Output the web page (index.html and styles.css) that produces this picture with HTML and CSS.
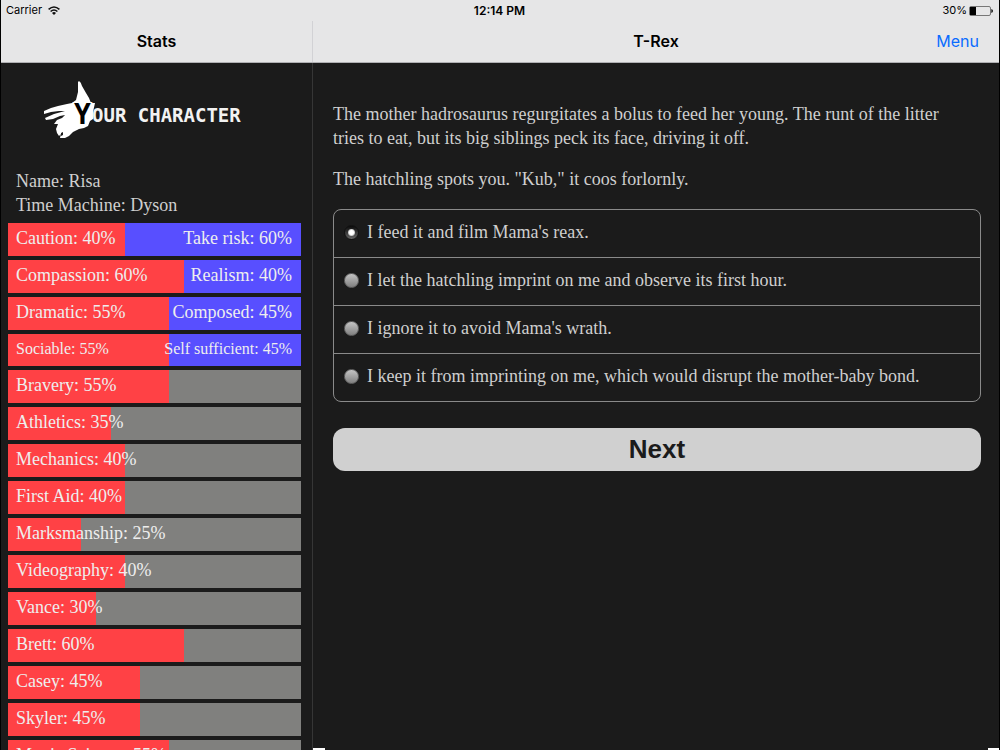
FILE: index.html
```html
<!DOCTYPE html>
<html lang="en">
<head>
<meta charset="utf-8">
<title>T-Rex</title>
<link rel="stylesheet" href="styles.css">
</head>
<body>
<div class="app">
  <header class="top">
    <div class="status">
      <span class="carrier">Carrier
        <svg class="wifi" viewBox="0 0 12 9" aria-hidden="true"><g fill="none" stroke="#111" stroke-width="1.6"><path d="M.6 3.4Q6-1.4 11.4 3.4"/><path d="M2.6 5.5Q6 2.5 9.4 5.5"/></g><path d="M4 6.9Q6 5.3 8 6.9L6 9Z" fill="#111"/></svg>
      </span>
      <strong class="clock">12:14 PM</strong>
      <span class="battery">30%
        <svg class="cell" viewBox="0 0 24 10" aria-hidden="true"><rect x=".5" y=".5" width="21" height="9" rx="1.5" fill="none" stroke="#777"/><rect x="1" y="1" width="6" height="8" fill="#000"/><path d="M22.3 3Q24 3.500 24 5T22.300 7Z" fill="#111"/></svg>
      </span>
    </div>
    <div class="titles">
      <h1 class="title title-stats">Stats</h1>
      <div class="title-main"><h2 class="title">T-Rex</h2><a class="menu" href="#menu">Menu</a></div>
    </div>
  </header>
  <div class="panes">
    <aside class="stats">
      <svg class="logo" viewBox="0 0 200 64" role="img" aria-label="Your character">
        <path fill="#fff" d="M37 3Q39 4 40 8L44 15L47 20L49 25L53 25L51 34L51 41L48 43L46 48L42 50L37 51L31 54L27 58L23 60L18 60L19 56L17 58L15 55L14 51L16 46L12 46L15 42L20 40L23 37L18 38L11 41L4 42L3 40L12 36L23 33L17 33L9 34L2 36L2 33L9 30L16 28L25 26L30 25L34 22L36 14L36 4Z"/>
        <path fill="#1b1b1b" d="M19 55L21 54L21 57L19 58Z"/>
        <text class="logo-initial" x="32" y="46">Y</text>
        <text class="logo-text" x="50" y="44">OUR CHARACTER</text>
      </svg>
      <p class="facts">Name: Risa<br>Time Machine: Dyson</p>
      <div class="bars">
        <div class="bar opposed"><i style="width:40%"></i><span>Caution: 40%</span><span>Take risk: 60%</span></div>
        <div class="bar opposed"><i style="width:60%"></i><span>Compassion: 60%</span><span>Realism: 40%</span></div>
        <div class="bar opposed"><i style="width:55%"></i><span>Dramatic: 55%</span><span>Composed: 45%</span></div>
        <div class="bar opposed tight"><i style="width:55%"></i><span>Sociable: 55%</span><span>Self sufficient: 45%</span></div>
        <div class="bar"><i style="width:55%"></i><span>Bravery: 55%</span></div>
        <div class="bar"><i style="width:35%"></i><span>Athletics: 35%</span></div>
        <div class="bar"><i style="width:40%"></i><span>Mechanics: 40%</span></div>
        <div class="bar"><i style="width:40%"></i><span>First Aid: 40%</span></div>
        <div class="bar"><i style="width:25%"></i><span>Marksmanship: 25%</span></div>
        <div class="bar"><i style="width:40%"></i><span>Videography: 40%</span></div>
        <div class="bar"><i style="width:30%"></i><span>Vance: 30%</span></div>
        <div class="bar"><i style="width:60%"></i><span>Brett: 60%</span></div>
        <div class="bar"><i style="width:45%"></i><span>Casey: 45%</span></div>
        <div class="bar"><i style="width:45%"></i><span>Skyler: 45%</span></div>
        <div class="bar"><i style="width:55%"></i><span>Movie Science: 55%</span></div>
      </div>
    </aside>
    <main class="story">
      <p>The mother hadrosaurus regurgitates a bolus to feed her young. The runt of the litter tries to eat, but its big siblings peck its face, driving it off.</p>
      <p>The hatchling spots you. "Kub," it coos forlornly.</p>
      <form class="form">
        <div class="choices">
          <label class="choice"><input type="radio" name="choice" checked>I feed it and film Mama's reax.</label>
          <label class="choice"><input type="radio" name="choice">I let the hatchling imprint on me and observe its first hour.</label>
          <label class="choice"><input type="radio" name="choice">I ignore it to avoid Mama's wrath.</label>
          <label class="choice"><input type="radio" name="choice">I keep it from imprinting on me, which would disrupt the mother-baby bond.</label>
        </div>
        <button class="next" type="button">Next</button>
      </form>
    </main>
  </div>
</div>
</body>
</html>
```
FILE: styles.css
```css
* { box-sizing: border-box; }
body { margin: 0; background: #1b1b1b; color: #cfcfcf; font: 18px/24px "Palatino", "Palatino Linotype", "Liberation Serif", serif; }
p { margin: 0; }
.app { height: 100vh; display: flex; flex-direction: column; overflow: hidden; border: solid #000; border-width: 0 1px; }
.top { flex: none; background: #e6e6e7; color: #000; font-family: Inter, sans-serif; border-bottom: 1px solid #b0b0b3; }
.status { display: grid; grid-template-columns: 1fr auto 1fr; height: 21px; padding: 0 6px 0 5px; font-size: 11px; line-height: 21px; }
.carrier, .battery { display: flex; align-items: center; gap: 6px; }
.battery { justify-content: flex-end; gap: 2px; }
.wifi { width: 12px; height: 9px; }
.cell { width: 24px; height: 10px; }
.clock { font-size: 12px; font-weight: 600; }
.titles { display: grid; grid-template-columns: 312px 1fr; height: 41px; }
.title { margin: 0; text-align: center; font-size: 16px; line-height: 41px; font-weight: 600; }
.title-stats { border-right: 1px solid #d2d2d5; }
.title-main { position: relative; }
.menu { position: absolute; right: 20px; top: 0; color: #0a6cff; font-size: 16px; line-height: 41px; text-decoration: none; }
.panes { flex: 1; min-height: 0; display: grid; grid-template-columns: 312px 1fr; }
.stats { overflow: hidden; padding: 15px 11px 0 7px; border-right: 1px solid #363636; }
.logo { display: block; width: 200px; height: 64px; margin: 0 0 27px 34px; }
.logo-text { fill: #f2f2f2; font: bold 19px "DejaVu Sans Mono", monospace; }
.logo-initial { fill: #000; stroke: #fff; stroke-width: 2px; paint-order: stroke; font: bold 28px "DejaVu Sans Mono", monospace; }
.facts { padding-left: 8px; }
.bars { display: grid; gap: 4px; padding-top: 6px; }
.bar { position: relative; display: flex; justify-content: space-between; height: 33px; padding: 0 9px 0 8px; line-height: 31px; color: #eee; background: #80807e; white-space: nowrap; }
.bar i { position: absolute; inset: 0 auto 0 0; background: #ff4145; }
.bar span { position: relative; }
.opposed { background: #584fff; }
.tight { height: 32px; font-size: 16px; line-height: 30px; }
.story { padding: 39px 18px 0 20px; display: flex; flex-direction: column; gap: 17px; background: linear-gradient(#fff, #fff) left bottom / 12px 2px no-repeat, linear-gradient(#fff, #fff) right bottom / 11px 2px no-repeat; }
.story p { padding-right: 8px; }
.form { display: grid; gap: 26px; padding-top: 1px; }
.choices { border: 1px solid #8a8a8a; border-radius: 8px; }
.choice { display: flex; align-items: center; gap: 8px; min-height: 48px; padding: 8px 10px 11px; border-bottom: 1px solid #8a8a8a; }
.choice:last-child { min-height: 47px; border-bottom: 0; }
.choice input { appearance: none; flex: none; width: 15px; height: 15px; margin: 0; border: 1px solid #666; border-radius: 50%; background: linear-gradient(#c4c4c4, #808080); }
.choice input:checked { border-color: #111; background: radial-gradient(circle, #fff 0 2px, #ccc 3px, transparent 4px), linear-gradient(#0a0a0a, #666); }
.next { height: 43px; padding: 0; border: 0; border-radius: 12px; background: #d0d0d0; color: #1b1b1b; font: bold 26px/43px "Liberation Sans", sans-serif; }
```
